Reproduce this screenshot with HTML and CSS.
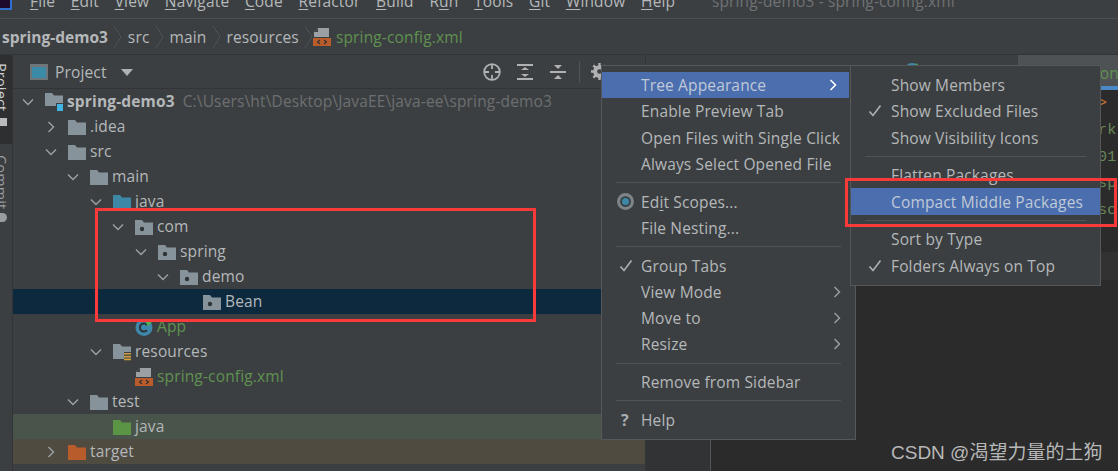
FILE: index.html
```html
<!DOCTYPE html>
<html lang="en">
<head>
<meta charset="utf-8">
<title>spring-demo3 - spring-config.xml</title>
<link rel="stylesheet" href="styles.css">
</head>
<body>
<svg class="defs" width="0" height="0" aria-hidden="true">
  <symbol id="folder" viewBox="0 0 18 16"><path d="M0 1h7l2 2.5h9V16H0z" fill="currentColor"/></symbol>
  <symbol id="pkg" viewBox="0 0 18 16"><path d="M0 1h7l2 2.5h9V16H0z" fill="#87939a"/><circle cx="7" cy="10" r="2.2" fill="#2f3437"/></symbol>
  <symbol id="res" viewBox="0 0 18 18"><path d="M0 1h7l2 2.5h9V16H0z" fill="#87939a"/><path d="M11 9h8v10h-8z" fill="#3c3f41"/><path d="M11 10h7v1.6h-7zM11 12.8h7v1.6h-7zM11 15.6h7v1.6h-7z" fill="#d0a040"/></symbol>
  <symbol id="xml" viewBox="0 0 18 18"><path d="M5 0h11v9H1V4z" fill="#9aa0a4"/><path d="M1 4h4V0z" fill="#3c3f41"/><path d="M0 10h18v8H0z" fill="#b85c2c"/><path d="M7 12l-2.500 2 2.500 2M11 12l2.500 2-2.500 2" fill="none" stroke="#2e2e2e" stroke-width="1.100"/></symbol>
  <symbol id="cls" viewBox="0 0 18 18"><circle cx="9" cy="9.500" r="8.500" fill="#3d88ab"/><path d="M12 7a4 4 0 1 0 0 5" fill="none" stroke="#2e3436" stroke-width="2"/><path d="M11 5l3-4 1 2.500 3-.5-5 5z" fill="#4eb04a"/></symbol>
  <symbol id="chev-d" viewBox="0 0 12 8"><path d="M1 1.500l5 5 5-5" fill="none" stroke="#9da1a4" stroke-width="1.400"/></symbol>
  <symbol id="chev-r" viewBox="0 0 8 12"><path d="M1.500 1l5 5-5 5" fill="none" stroke="#9da1a4" stroke-width="1.400"/></symbol>
  <symbol id="check" viewBox="0 0 14 14"><path d="M1.500 7.500l3.500 4L12.500 1.500" fill="none" stroke="#a8adb0" stroke-width="1.700"/></symbol>
</svg>

<div class="appicon"></div>

<nav class="menubar">
  <span class="mi"><u>F</u>ile</span>
  <span class="mi"><u>E</u>dit</span>
  <span class="mi"><u>V</u>iew</span>
  <span class="mi"><u>N</u>avigate</span>
  <span class="mi"><u>C</u>ode</span>
  <span class="mi"><u>R</u>efactor</span>
  <span class="mi"><u>B</u>uild</span>
  <span class="mi">R<u>u</u>n</span>
  <span class="mi"><u>T</u>ools</span>
  <span class="mi"><u>G</u>it</span>
  <span class="mi"><u>W</u>indow</span>
  <span class="mi"><u>H</u>elp</span>
  <span class="mi wintitle">spring-demo3 - spring-config.xml</span>
</nav>

<div class="crumbs">
  <b>spring-demo3</b><i class="sep"></i><span>src</span><i class="sep"></i><span>main</span><i class="sep"></i><span>resources</span><i class="sep"></i>
  <svg class="crumbicon" width="18" height="18"><use href="#xml"/></svg><span class="green">spring-config.xml</span>
</div>

<div class="workspace">
  <aside class="strip">
    <div class="tab-on"><span class="vtext">Project</span><span class="vsq"></span></div>
    <div class="tab-off"><span class="vtext">Commit</span><span class="vgear"></span></div>
  </aside>

  <section class="panel">
    <header class="phead">
      <svg class="pico" width="18" height="16" viewBox="0 0 18 16"><path d="M0 0h18v16H0z" fill="#6f7679"/><path d="M2 3h14v11H2z" fill="#3a8aa8"/></svg>
      <span class="ptitle">Project</span>
      <span class="tri"></span>
      <span class="tools">
        <svg width="18" height="18" viewBox="0 0 18 18"><g fill="none" stroke="#afb1b3" stroke-width="1.800"><circle cx="9" cy="9" r="7.800"/><path d="M9 1v5M9 12v5M1 9h5M12 9h5"/></g></svg>
        <svg width="18" height="18" viewBox="0 0 18 18"><path d="M1 1h16v2H1zM1 15h16v2H1z" fill="#afb1b3"/><path d="M5 7l4-3 4 3zM5 11l4 3 4-3z" fill="#afb1b3"/></svg>
        <svg width="18" height="18" viewBox="0 0 18 18"><path d="M1 8h16v2H1z" fill="#afb1b3"/><path d="M5 2l4 4 4-4zM5 16l4-4 4 4z" fill="#afb1b3"/></svg>
        <i class="toolsep"></i>
        <svg class="gear" width="17" height="17" viewBox="0 0 18 18"><circle cx="9" cy="9" r="5" fill="none" stroke="#afb1b3" stroke-width="3.500"/><path d="M9 0v18M0 9h18M2.500 2.500l13 13M15.500 2.500l-13 13" stroke="#afb1b3" stroke-width="2.500"/><circle cx="9" cy="9" r="2.500" fill="#3c3f41"/></svg>
      </span>
    </header>

    <div class="tree">
      <div class="row l0"><svg class="cd" width="12" height="8"><use href="#chev-d"/></svg><svg class="ic" width="18" height="20" viewBox="0 0 18 20"><path d="M0 1h7l2 2.500h9V14H0z" fill="#87939a"/><path d="M11 11h8v9h-8z" fill="#3c3f41"/><path d="M12 12h7v7h-7z" fill="#3fb4e5"/></svg><b class="t">spring-demo3</b><span class="t path">C:\Users\ht\Desktop\JavaEE\java-ee\spring-demo3</span></div>
      <div class="row l1"><svg class="cr" width="8" height="12"><use href="#chev-r"/></svg><svg class="ic grey" width="18" height="16"><use href="#folder"/></svg><span class="t">.idea</span></div>
      <div class="row l1"><svg class="cd" width="12" height="8"><use href="#chev-d"/></svg><svg class="ic grey" width="18" height="16"><use href="#folder"/></svg><span class="t">src</span></div>
      <div class="row l2"><svg class="cd" width="12" height="8"><use href="#chev-d"/></svg><svg class="ic grey" width="18" height="16"><use href="#folder"/></svg><span class="t">main</span></div>
      <div class="row l3"><svg class="cd" width="12" height="8"><use href="#chev-d"/></svg><svg class="ic blue" width="18" height="16"><use href="#folder"/></svg><span class="t">java</span></div>
      <div class="row l4"><svg class="cd" width="12" height="8"><use href="#chev-d"/></svg><svg class="ic" width="18" height="16"><use href="#pkg"/></svg><span class="t">com</span></div>
      <div class="row l5"><svg class="cd" width="12" height="8"><use href="#chev-d"/></svg><svg class="ic" width="18" height="16"><use href="#pkg"/></svg><span class="t">spring</span></div>
      <div class="row l6"><svg class="cd" width="12" height="8"><use href="#chev-d"/></svg><svg class="ic" width="18" height="16"><use href="#pkg"/></svg><span class="t">demo</span></div>
      <div class="row l7 selected"><span class="nochev"></span><svg class="ic" width="18" height="16"><use href="#pkg"/></svg><span class="t">Bean</span></div>
      <div class="row l4"><span class="nochev"></span><svg class="ic" width="18" height="18"><use href="#cls"/></svg><span class="t green">App</span></div>
      <div class="row l3"><svg class="cd" width="12" height="8"><use href="#chev-d"/></svg><svg class="ic" width="18" height="18"><use href="#res"/></svg><span class="t">resources</span></div>
      <div class="row l4"><span class="nochev"></span><svg class="ic" width="18" height="18"><use href="#xml"/></svg><span class="t green">spring-config.xml</span></div>
      <div class="row l2"><svg class="cd" width="12" height="8"><use href="#chev-d"/></svg><svg class="ic grey" width="18" height="16"><use href="#folder"/></svg><span class="t">test</span></div>
      <div class="row l3 testrow"><span class="nochev"></span><svg class="ic lime" width="18" height="16"><use href="#folder"/></svg><span class="t">java</span></div>
      <div class="row l1 excl"><svg class="cr" width="8" height="12"><use href="#chev-r"/></svg><svg class="ic rust" width="18" height="16"><use href="#folder"/></svg><span class="t">target</span></div>
      <div class="row l1 lastrow"><span class="nochev"></span><svg class="ic blue" width="18" height="16"><use href="#folder"/></svg><span class="t green">spring-demo3.iml</span></div>
    </div>
  </section>

  <section class="editor">
    <div class="tabs">
      <span class="tab"><svg width="18" height="18"><use href="#cls"/></svg></span>
      <span class="tab active"><svg width="18" height="18"><use href="#xml"/></svg><span class="green">spring-config.xml</span></span>
    </div>
    <div class="editbody">
      <div class="gutter"></div>
      <div class="code">
        <div class="ln orange">&gt;</div>
        <div class="ln">rk</div>
        <div class="ln">01</div>
        <div class="ln">sp</div>
        <div class="ln">sc</div>
        <div class="ln caret"></div>
      </div>
    </div>
  </section>
</div>

<div class="popup main-pop">
  <div class="it hi"><span class="lbl">Tree Appearance</span><svg class="arrow" width="8" height="12"><path d="M1.500 1l5 5-5 5" fill="none" stroke="#fff" stroke-width="1.600"/></svg></div>
  <div class="it"><span class="lbl">Enable Preview Tab</span></div>
  <div class="it"><span class="lbl">Open Files with Single Click</span></div>
  <div class="it"><span class="lbl">Always Select Opened File</span></div>
  <div class="hr"></div>
  <div class="it"><span class="radio"></span><span class="lbl">Ed<u>i</u>t Scopes...</span></div>
  <div class="it"><span class="lbl">File Nesting...</span></div>
  <div class="hr"></div>
  <div class="it"><svg class="ck" width="14" height="14"><use href="#check"/></svg><span class="lbl">Group Tabs</span></div>
  <div class="it"><span class="lbl">View Mode</span><svg class="arrow" width="8" height="12"><use href="#chev-r"/></svg></div>
  <div class="it"><span class="lbl">Move to</span><svg class="arrow" width="8" height="12"><use href="#chev-r"/></svg></div>
  <div class="it"><span class="lbl">Resize</span><svg class="arrow" width="8" height="12"><use href="#chev-r"/></svg></div>
  <div class="hr"></div>
  <div class="it"><span class="lbl">Remove from Sidebar</span></div>
  <div class="hr"></div>
  <div class="it"><span class="q">?</span><span class="lbl">Help</span></div>
</div>

<div class="popup sub-pop">
  <div class="it"><span class="lbl">Show Members</span></div>
  <div class="it"><svg class="ck" width="14" height="14"><use href="#check"/></svg><span class="lbl">Show Excluded Files</span></div>
  <div class="it"><span class="lbl">Show Visibility Icons</span></div>
  <div class="hr"></div>
  <div class="it"><span class="lbl">Flatten Packages</span></div>
  <div class="it hi"><span class="lbl">Compact Middle Packages</span></div>
  <div class="hr"></div>
  <div class="it"><span class="lbl">Sort by Type</span></div>
  <div class="it"><svg class="ck" width="14" height="14"><use href="#check"/></svg><span class="lbl">Folders Always on Top</span></div>
</div>

<div class="mark mark-tree"></div>
<div class="mark mark-menu"></div>
<div class="watermark">CSDN @渴望力量的土狗</div>
</body>
</html>
```

FILE: styles.css
```css
* { box-sizing: border-box; }
html, body { margin: 0; padding: 0; }
body {
  width: 1118px; height: 471px; overflow: hidden; position: relative;
  display: flex; flex-direction: column;
  background: #3c3f41; color: #b4b8ba;
  font-family: "Open Sans", "Noto Sans", sans-serif; font-size: 15.500px; letter-spacing: .15px;
}
.defs { position: absolute; }
.green { color: #5f9250; }
u { text-underline-offset: 2px; }

.appicon { position: absolute; left: -6px; top: -6px; width: 18px; height: 16px; background: #1d0a2c; border: 2px solid #2f6fd0; }

.menubar { height: 19px; flex: none; border-bottom: 1px solid #4c4f51; overflow: hidden; display: flex; align-items: flex-end; gap: 15.700px; padding-left: 30px; }
.mi { display: block; line-height: 20px; margin-bottom: 7px; flex: none; }
.wintitle { margin-left: 21px; color: #6f7274; }

.crumbs { height: 36px; flex: none; border-bottom: 1px solid #323437; display: flex; align-items: center; padding-left: 2px; }
.crumbs b { font-weight: 700; letter-spacing: 0; }
.sep { width: 7px; height: 22px; margin: 0 6.500px; flex: none; background: linear-gradient(to top right, transparent 46%, #5a5d5f 50%, transparent 54%) top/100% 50% no-repeat, linear-gradient(to bottom right, transparent 46%, #5a5d5f 50%, transparent 54%) bottom/100% 50% no-repeat; }
.crumbicon { margin: 0 5px 0 -6px; flex: none; }

.workspace { flex: 1; display: flex; min-height: 0; }
.strip { width: 13px; flex: none; border-right: 1px solid #323437; overflow: hidden; }
.tab-on { height: 89px; background: #2d2f30; padding-top: 8px; }
.tab-off { padding-top: 11px; }
.vtext { display: block; writing-mode: vertical-rl; margin-left: -9px; line-height: 20px; height: 48px; font-size: 14.500px; white-space: nowrap; }
.tab-on .vtext { color: #d0d2d3; }
.tab-off .vtext { color: #9a9da0; }
.vsq { display: block; width: 7px; height: 8px; margin-top: 7px; background: #b9bbbd; }
.vgear { display: block; width: 7px; height: 9px; margin-top: 10px; background: #9a9da0; border-radius: 0 5px 5px 0; }

.panel { width: 633px; flex: none; border-right: 1px solid #323437; display: flex; flex-direction: column; min-height: 0; }
.phead { height: 34px; flex: none; border-bottom: 1px solid #323437; display: flex; align-items: center; padding-left: 17px; }
.pico { flex: none; }
.ptitle { margin-left: 7px; }
.tri { margin-left: 14px; margin-top: 2px; border-left: 6px solid transparent; border-right: 6px solid transparent; border-top: 7px solid #afb1b3; }
.tools { margin-left: 350px; display: flex; align-items: center; gap: 15px; }
.toolsep { width: 1px; height: 22px; background: #515456; margin: 0 -4px 0 -3px; }
.gear { flex: none; }

.tree { flex: 1; min-height: 0; overflow: hidden; }
.row { height: 25px; display: flex; align-items: center; white-space: nowrap; }
.row svg { flex: none; }
.l0 { padding-left: 9px; }
.l1 { padding-left: 32px; }
.l2 { padding-left: 54px; }
.l3 { padding-left: 77px; }
.l4 { padding-left: 99px; }
.l5 { padding-left: 122px; }
.l6 { padding-left: 144px; }
.l7 { padding-left: 167px; }
.cd { margin-right: 11px; }
.cr { margin-left: 2px; margin-right: 13px; }
.nochev { width: 23px; flex: none; }
.ic { margin-right: 4px; }
.grey { color: #87939a; }
.blue { color: #3d88a6; }
.lime { color: #5a9444; }
.rust { color: #b85c2c; }
.t { color: #b4b8ba; margin-top: -2px; }
.t.green { color: #5f9250; }
.t.path { margin-left: 8px; color: #6c6f71; }
.selected { background: #0d293e; }
.testrow { background: #49544a; }
.excl { background: #4f4b41; }
.lastrow { padding-top: 7px; }

.editor { flex: 1; min-width: 0; display: flex; flex-direction: column; }
.tabs { height: 35px; flex: none; display: flex; background: #3c3f41; padding-left: 257px; }
.tab { display: flex; align-items: flex-start; gap: 4px; padding-top: 7px; color: #5f9250; white-space: nowrap; overflow: hidden; }
.tab.active { margin-left: 97px; flex: 1; background: #4e5254; border-bottom: 4px solid #4a88c7; padding-left: 19px; }
.editbody { flex: 1; display: flex; min-height: 0; }
.gutter { width: 65px; flex: none; background: #313335; border-right: 1px solid #555; }
.code { flex: 1; background: #2b2b2b; font-family: "Liberation Mono", monospace; font-size: 15px; color: #6a8759; overflow: hidden; padding-top: 1px; }
.ln { height: 26.800px; line-height: 26.800px; padding-left: 387px; white-space: nowrap; }
.orange { color: #cc7832; }
.caret { height: 28px; margin-top: 27px; background: #323232; }

.popup { position: absolute; background: #3c3f41; border: 1px solid #555759; padding: 6px 0; }
.main-pop { left: 601px; top: 65px; width: 255px; height: 375px; }
.sub-pop { left: 850px; top: 65px; width: 251px; height: 221px; }
.it { height: 26.300px; display: flex; align-items: center; position: relative; padding-left: 39px; white-space: nowrap; }
.sub-pop .it { padding-left: 40px; }
.hi { background: #4b6eaf; color: #c0c9d6; }
.main-pop .hi { margin-right: 6px; }
.hr { height: 11.300px; display: flex; align-items: center; margin: 0 14px; }
.hr::before { content: ""; flex: 1; height: 1px; background: #515456; }
.arrow { position: absolute; right: 12px; }
.main-pop .it:not(.hi) .arrow { right: 14px; }
.ck { position: absolute; left: 17px; }
.radio { position: absolute; left: 15px; width: 17px; height: 17px; border-radius: 50%; border: 3px solid #7d8386; background: #3d88a6; box-shadow: inset 0 0 0 2px #3c3f41; }
.q { position: absolute; left: 19px; font-weight: 700; font-size: 16px; color: #a8adb0; }

.mark { position: absolute; border: 3px solid #f83a3a; }
.mark-tree { left: 95px; top: 208px; width: 441px; height: 114px; }
.mark-menu { left: 845px; top: 178px; width: 272px; height: 49px; }

.watermark { position: absolute; left: 891px; top: 437px; font-family: "Liberation Sans", "Noto Sans CJK SC", sans-serif; font-size: 19px; letter-spacing: 0; color: #b8b8b8; white-space: nowrap; }
```
